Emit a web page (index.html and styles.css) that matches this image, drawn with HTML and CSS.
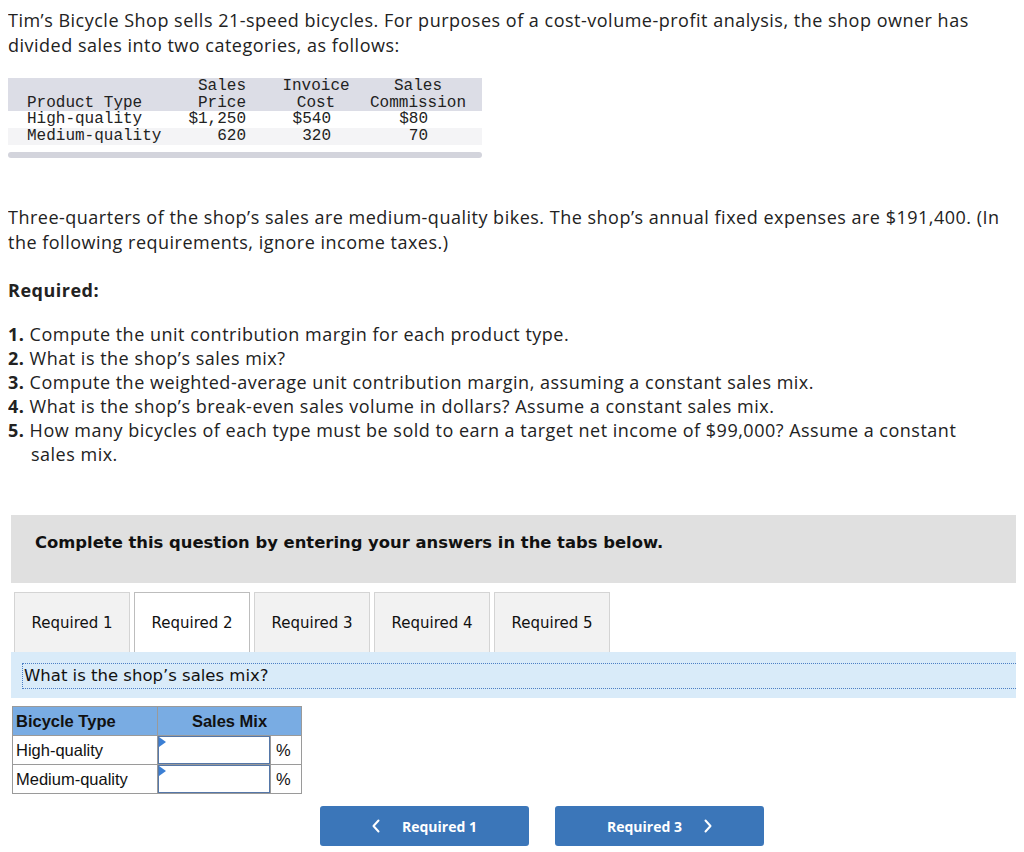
FILE: index.html
```html
<!DOCTYPE html>
<html lang="en">
  <head>
    <meta charset="UTF-8" />
    <title>Tim's Bicycle Shop</title>
    <link rel="stylesheet" href="styles.css">
  </head>
  <body>
    <p class="intro">
      Tim’s Bicycle Shop sells 21-speed bicycles. For purposes of a cost-volume-profit analysis, the shop owner has
      divided sales into two categories, as follows:
    </p>

    <div class="data-wrap">
      <table class="data-table">
        <colgroup>
          <col class="w-type" />
          <col class="w-price" />
          <col class="w-cost" />
          <col class="w-comm" />
        </colgroup>
        <thead>
          <tr>
            <th class="col-type">Product Type</th>
            <th class="col-price">Sales<br />Price</th>
            <th class="col-cost">Invoice<br />Cost</th>
            <th class="col-comm">Sales<br />Commission</th>
          </tr>
        </thead>
        <tbody>
          <tr>
            <td class="col-type">High-quality</td>
            <td class="col-price">$1,250</td>
            <td class="col-cost">$540</td>
            <td class="col-comm">$80</td>
          </tr>
          <tr class="alt">
            <td class="col-type">Medium-quality</td>
            <td class="col-price">620</td>
            <td class="col-cost">320</td>
            <td class="col-comm">70</td>
          </tr>
        </tbody>
      </table>
      <div class="scroll-bar"></div>
    </div>

    <p class="facts">
      Three-quarters of the shop’s sales are medium-quality bikes. The shop’s annual fixed expenses are $191,400. (In
      the following requirements, ignore income taxes.)
    </p>

    <p class="required-title">Required:</p>

    <ol class="req-list">
      <li><b>1.</b> Compute the unit contribution margin for each product type.</li>
      <li><b>2.</b> What is the shop’s sales mix?</li>
      <li><b>3.</b> Compute the weighted-average unit contribution margin, assuming a constant sales mix.</li>
      <li><b>4.</b> What is the shop’s break-even sales volume in dollars? Assume a constant sales mix.</li>
      <li><b>5.</b> How many bicycles of each type must be sold to earn a target net income of $99,000? Assume a constant sales mix.</li>
    </ol>

    <div class="notice">Complete this question by entering your answers in the tabs below.</div>

    <div class="tabs">
      <div class="tab">Required 1</div>
      <div class="tab active">Required 2</div>
      <div class="tab">Required 3</div>
      <div class="tab">Required 4</div>
      <div class="tab">Required 5</div>
    </div>

    <div class="question-band">
      <div class="question-text">What is the shop’s sales mix?</div>
    </div>

    <table class="answer-table">
      <tr>
        <th class="ans-type">Bicycle Type</th>
        <th class="ans-mix" colspan="2">Sales Mix</th>
      </tr>
      <tr>
        <td class="ans-type">High-quality</td>
        <td class="ans-input"><div class="input-box"></div></td>
        <td class="ans-unit">%</td>
      </tr>
      <tr>
        <td class="ans-type">Medium-quality</td>
        <td class="ans-input"><div class="input-box"></div></td>
        <td class="ans-unit">%</td>
      </tr>
    </table>

    <div class="nav">
      <button class="nav-btn">
        <svg class="chev" width="8" height="14" viewBox="0 0 8 14"><path d="M6.5 1.5 L1.5 7 L6.5 12.5" fill="none" stroke="white" stroke-width="2" stroke-linecap="round" stroke-linejoin="round" /></svg>
        Required 1
      </button>
      <button class="nav-btn">
        Required 3
        <svg class="chev chev-right" width="8" height="14" viewBox="0 0 8 14"><path d="M1.5 1.5 L6.5 7 L1.5 12.5" fill="none" stroke="white" stroke-width="2" stroke-linecap="round" stroke-linejoin="round" /></svg>
      </button>
    </div>
  </body>
</html>
```

FILE: styles.css
```css
body {
  font-family: "Open Sans", Lato, sans-serif;
  font-size: 18px;
  letter-spacing: 0.5px;
  color: #222;
  margin: 8px;
  background-color: white;
}

.intro,
.facts {
  margin: 0;
  line-height: 25px;
}

.data-wrap {
  width: 474px;
  margin-top: 20px;
}

.data-table {
  border-collapse: collapse;
  table-layout: fixed;
  width: 474px;
  font-family: "Liberation Mono", monospace;
  font-size: 16px;
  letter-spacing: 0;
  line-height: 16.5px;
  color: #222;
  white-space: nowrap;
}

.w-type { width: 172px; }
.w-price { width: 70px; }
.w-cost { width: 110px; }
.w-comm { width: 122px; }

.data-table th {
  font-weight: normal;
  background-color: #dcdde6;
  vertical-align: bottom;
  padding: 0;
}

.data-table td {
  padding: 0;
  height: 17px;
}

.data-table .alt td {
  background-color: #f4f4f6;
}

.data-table .col-type {
  padding-left: 19px;
  text-align: left;
}

.data-table .col-price {
  padding-right: 4px;
  text-align: right;
}

.data-table th.col-cost {
  text-align: center;
  padding-left: 22px;
}

.data-table td.col-cost {
  text-align: right;
  padding-right: 29px;
}

.data-table th.col-comm {
  text-align: center;
  padding-right: 6px;
}

.data-table td.col-comm {
  text-align: right;
  padding-right: 54px;
}

.scroll-bar {
  height: 6px;
  margin-top: 7px;
  border-radius: 3px;
  background-color: #d3d4dc;
}

.facts {
  margin-top: 47px;
}

.required-title {
  margin: 23px 0 0;
  font-weight: bold;
  line-height: 25px;
}

.req-list {
  list-style: none;
  margin: 19px 0 0;
  padding: 0;
  max-width: 970px;
  line-height: 24px;
}

.req-list li {
  padding-left: 23px;
  text-indent: -23px;
}

.notice {
  margin: 49px 0 0 3px;
  height: 68px;
  box-sizing: border-box;
  padding: 16px 0 0 24px;
  line-height: 24px;
  background-color: #e0e0e0;
  font-family: "DejaVu Sans", Verdana, sans-serif;
  font-size: 16.4px;
  font-weight: bold;
  letter-spacing: 0;
  color: #111;
}

.tabs {
  display: flex;
  gap: 4px;
  margin: 9px 0 0 6px;
}

.tab {
  width: 114px;
  height: 59px;
  display: flex;
  align-items: center;
  justify-content: center;
  background-color: #f2f2f2;
  border: 1px solid #d4d4d4;
  border-bottom: none;
  font-family: "DejaVu Sans", Verdana, sans-serif;
  font-size: 15px;
  letter-spacing: 0;
  color: #111;
}

.tab.active {
  background-color: white;
  border-color: #bdbdbd;
}

.question-band {
  margin-left: 3px;
  height: 46px;
  padding: 11px 0 0 11px;
  box-sizing: border-box;
  background-color: #d9ebf9;
}

.question-text {
  height: 24px;
  line-height: 24px;
  padding-left: 1px;
  border: 1px dotted #4d7fc4;
  border-right: none;
  font-family: "DejaVu Sans", Verdana, sans-serif;
  font-size: 16.5px;
  letter-spacing: 0;
  color: #111;
}

.answer-table {
  margin: 8px 0 0 4px;
  border-collapse: collapse;
  font-family: "Liberation Sans", Arial, sans-serif;
  font-size: 16.5px;
  letter-spacing: 0;
  color: #111;
}

.answer-table th,
.answer-table td {
  border: 1px solid #9a9a9a;
  height: 28px;
  padding: 0;
}

.answer-table th {
  background-color: #79ace3;
  font-weight: bold;
}

.answer-table .ans-type {
  width: 141px;
  padding-left: 3px;
  text-align: left;
}

.ans-mix {
  text-align: center;
}

.ans-input {
  width: 112px;
  position: relative;
}

.input-box {
  position: absolute;
  inset: 0;
  border: 1px solid #5577a8;
}

.input-box::before {
  content: "";
  position: absolute;
  left: 0;
  top: 0;
  border-top: 5px solid transparent;
  border-bottom: 5px solid transparent;
  border-left: 7px solid #3b7fd4;
}

.answer-table .ans-unit {
  width: 25px;
  padding-left: 5px;
}

.nav {
  display: flex;
  gap: 26px;
  margin-top: 12px;
  padding-left: 312px;
}

.nav-btn {
  width: 209px;
  height: 40px;
  border: none;
  border-radius: 3px;
  background-color: #3b76b9;
  color: white;
  font-family: "Open Sans", sans-serif;
  font-size: 14px;
  font-weight: bold;
  letter-spacing: 0;
  display: flex;
  align-items: center;
  justify-content: center;
}

.chev {
  margin-right: 22px;
}

.chev-right {
  margin-right: 0;
  margin-left: 22px;
}
```
